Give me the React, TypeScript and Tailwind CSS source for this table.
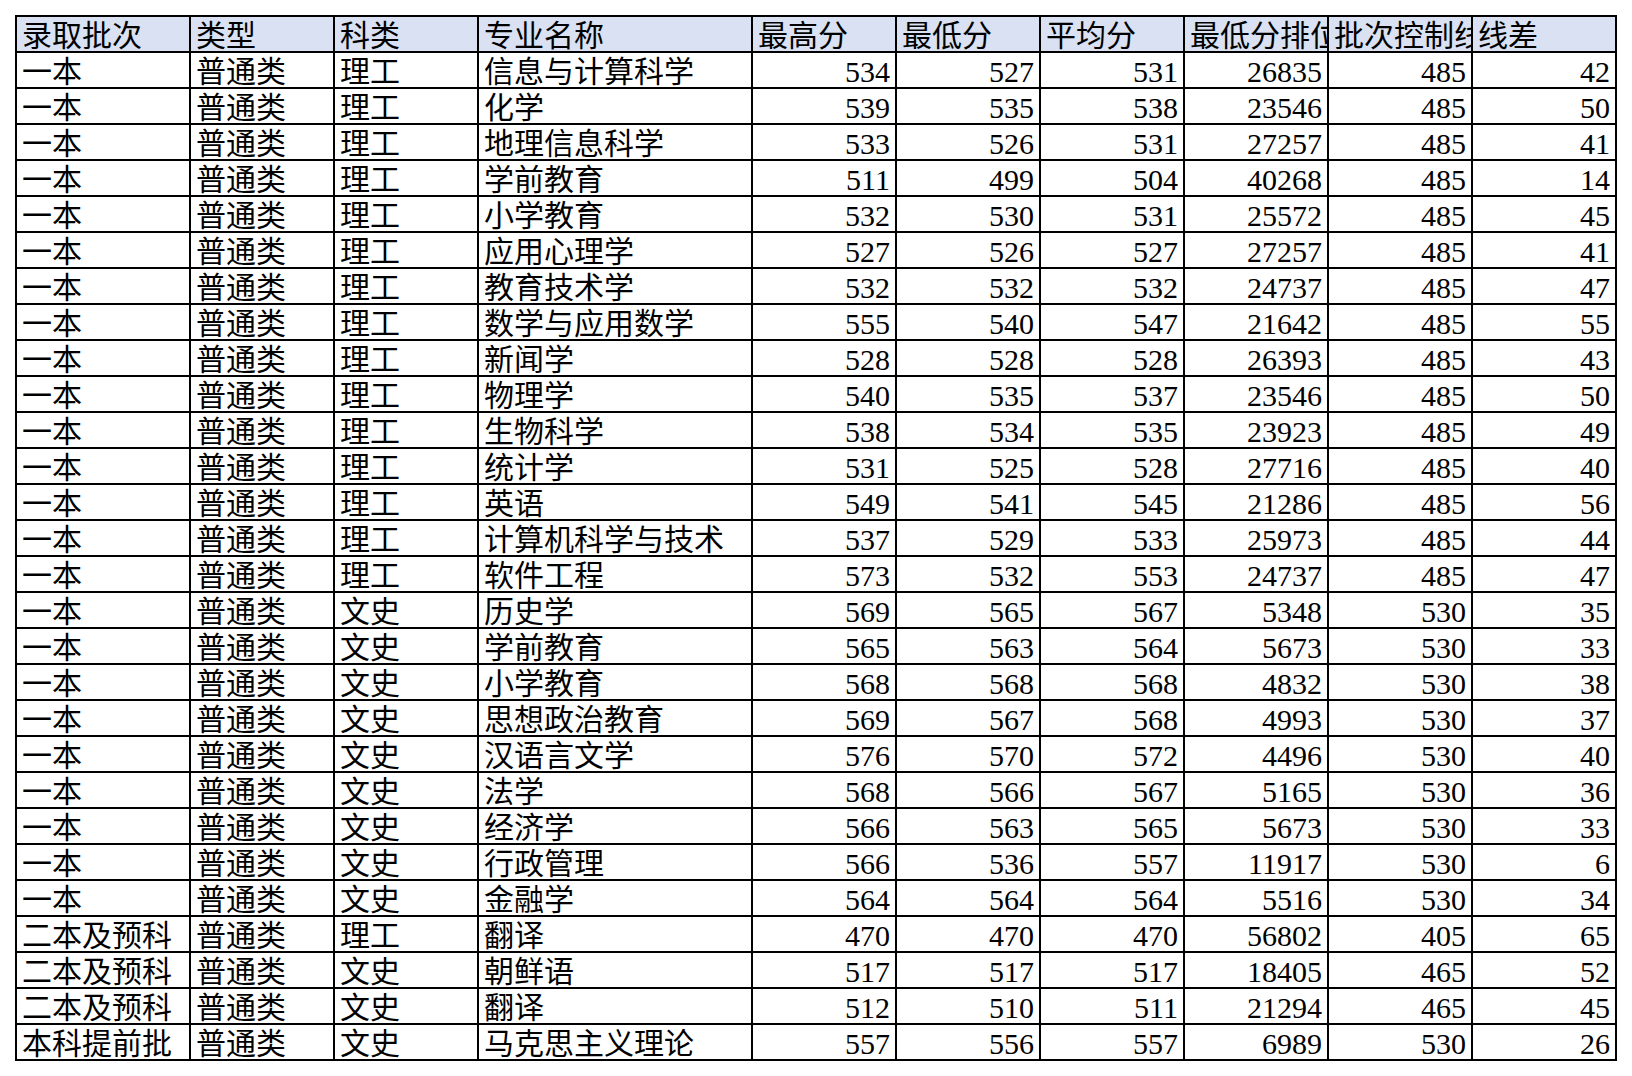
import React from "react";

type Row = [string, string, string, string, number, number, number, number, number, number];

const headers = ["录取批次", "类型", "科类", "专业名称", "最高分", "最低分", "平均分", "最低分排位", "批次控制线", "线差"];

const rows: Row[] = [
  ["一本", "普通类", "理工", "信息与计算科学", 534, 527, 531, 26835, 485, 42],
  ["一本", "普通类", "理工", "化学", 539, 535, 538, 23546, 485, 50],
  ["一本", "普通类", "理工", "地理信息科学", 533, 526, 531, 27257, 485, 41],
  ["一本", "普通类", "理工", "学前教育", 511, 499, 504, 40268, 485, 14],
  ["一本", "普通类", "理工", "小学教育", 532, 530, 531, 25572, 485, 45],
  ["一本", "普通类", "理工", "应用心理学", 527, 526, 527, 27257, 485, 41],
  ["一本", "普通类", "理工", "教育技术学", 532, 532, 532, 24737, 485, 47],
  ["一本", "普通类", "理工", "数学与应用数学", 555, 540, 547, 21642, 485, 55],
  ["一本", "普通类", "理工", "新闻学", 528, 528, 528, 26393, 485, 43],
  ["一本", "普通类", "理工", "物理学", 540, 535, 537, 23546, 485, 50],
  ["一本", "普通类", "理工", "生物科学", 538, 534, 535, 23923, 485, 49],
  ["一本", "普通类", "理工", "统计学", 531, 525, 528, 27716, 485, 40],
  ["一本", "普通类", "理工", "英语", 549, 541, 545, 21286, 485, 56],
  ["一本", "普通类", "理工", "计算机科学与技术", 537, 529, 533, 25973, 485, 44],
  ["一本", "普通类", "理工", "软件工程", 573, 532, 553, 24737, 485, 47],
  ["一本", "普通类", "文史", "历史学", 569, 565, 567, 5348, 530, 35],
  ["一本", "普通类", "文史", "学前教育", 565, 563, 564, 5673, 530, 33],
  ["一本", "普通类", "文史", "小学教育", 568, 568, 568, 4832, 530, 38],
  ["一本", "普通类", "文史", "思想政治教育", 569, 567, 568, 4993, 530, 37],
  ["一本", "普通类", "文史", "汉语言文学", 576, 570, 572, 4496, 530, 40],
  ["一本", "普通类", "文史", "法学", 568, 566, 567, 5165, 530, 36],
  ["一本", "普通类", "文史", "经济学", 566, 563, 565, 5673, 530, 33],
  ["一本", "普通类", "文史", "行政管理", 566, 536, 557, 11917, 530, 6],
  ["一本", "普通类", "文史", "金融学", 564, 564, 564, 5516, 530, 34],
  ["二本及预科", "普通类", "理工", "翻译", 470, 470, 470, 56802, 405, 65],
  ["二本及预科", "普通类", "文史", "朝鲜语", 517, 517, 517, 18405, 465, 52],
  ["二本及预科", "普通类", "文史", "翻译", 512, 510, 511, 21294, 465, 45],
  ["本科提前批", "普通类", "文史", "马克思主义理论", 557, 556, 557, 6989, 530, 26],
];

// every cell: 34px tall, text sits low like a spreadsheet
const cellBase = "h-[34px] overflow-hidden whitespace-nowrap pt-[4px] text-[30px] leading-[30px] text-black";

export default function App() {
  return (
    <div className="min-h-screen bg-white pl-[15px] pt-[15px] font-['Liberation_Serif','Noto_Sans_CJK_SC',serif]">
      <div className="grid w-max grid-cols-[172px_142px_142px_272px_142px_142px_142px_142px_142px_142px] gap-[2px] bg-black p-[2px]">
        {headers.map((h) => (
          <div key={h} className={`${cellBase} bg-[#d9e1f2] pl-[5px]`}>
            {h}
          </div>
        ))}
        {rows.map((row, i) =>
          row.map((value, j) => (
            <div
              key={`${i}-${j}`}
              className={`${cellBase} bg-white ${typeof value === "number" ? "pr-[5px] text-right" : "pl-[5px]"}`}
            >
              {value}
            </div>
          ))
        )}
      </div>
    </div>
  );
}
